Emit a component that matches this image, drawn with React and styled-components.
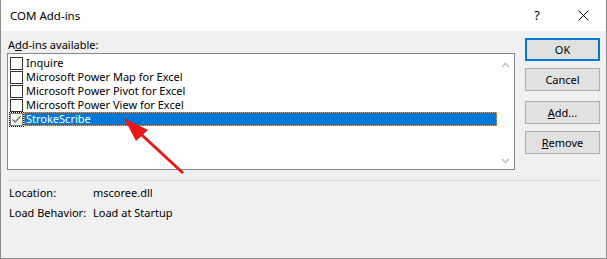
import React from "react";
import styled, { createGlobalStyle } from "styled-components";

const Global = createGlobalStyle`
  html, body { margin: 0; padding: 0; background: #f0f0f0; }
  body { font-family: "Segoe UI", "Noto Sans", sans-serif; font-size: 11px; line-height: 14px; color: #000; }
`;

const Window = styled.div`
  position: relative;
  width: 607px;
  height: 259px;
  box-sizing: border-box;
  border: 1px solid #8c8c8c;
  border-top: none;
  background: #f0f0f0;
  display: flex;
  flex-direction: column;
  overflow: hidden;
`;

const TitleBar = styled.div`
  height: 31px;
  background: #fff;
  display: flex;
  align-items: center;
  padding: 0 0 0 9px;
  flex-shrink: 0;
`;

const Title = styled.div`
  flex: 1;
  font-size: 11.5px;
  padding-top: 1px;
`;

const TitleBtn = styled.div`
  width: 46px;
  height: 31px;
  display: flex;
  align-items: center;
  justify-content: center;
  font-size: 12.5px;
`;

const Body = styled.div`
  flex: 1;
  padding: 6px 6px 0 6px;
  display: flex;
  flex-direction: column;
`;

const TopArea = styled.div`
  display: flex;
  gap: 10px;
`;

const LeftCol = styled.div`
  width: 509px;
  display: flex;
  flex-direction: column;
`;

const Label = styled.div`
  height: 16px;
  line-height: 16px;
  padding-left: 1px;
`;

const U = styled.span`
  text-decoration: underline;
`;

const ListBox = styled.div`
  height: 117px;
  box-sizing: border-box;
  border: 1px solid #828790;
  background: #fff;
  display: flex;
`;

const Rows = styled.div`
  flex: 1;
  padding-top: 2px;
`;

const Row = styled.div`
  height: 14px;
  line-height: 14px;
  display: flex;
  align-items: center;
`;

const Box = styled.div`
  width: 13px;
  height: 13px;
  box-sizing: border-box;
  margin-left: 2px;
  border: 1px solid ${p => (p.$checked ? "#7a7a7a" : "#333")};
  background: #fff;
  outline: ${p => (p.$focus ? "1px dotted #000" : "none")};
  outline-offset: 0px;
  display: flex;
  align-items: center;
  justify-content: center;
  flex-shrink: 0;
`;

const RowText = styled.div`
  margin-left: 1px;
  height: 14px;
  line-height: 14px;
  padding-left: 2px;
  box-sizing: border-box;
  flex: ${p => (p.$selected ? 1 : "none")};
  background: ${p => (p.$selected ? "#0078d7" : "transparent")};
  color: ${p => (p.$selected ? "#fff" : "#000")};
  outline: ${p => (p.$selected ? "1px dotted #ff9a3c" : "none")};
  outline-offset: -1px;
  white-space: nowrap;
`;

const ScrollBar = styled.div`
  width: 17px;
  display: flex;
  flex-direction: column;
  justify-content: space-between;
  align-items: center;
  padding: 8px 0 5px;
`;

const RightCol = styled.div`
  display: flex;
  flex-direction: column;
  padding-top: 1px;
`;

const Button = styled.div`
  width: 75px;
  height: 23px;
  box-sizing: border-box;
  margin-top: ${p => p.$mt || 0}px;
  background: #e1e1e1;
  border: ${p => (p.$default ? "2px solid #0078d7" : "1px solid #adadad")};
  display: flex;
  align-items: center;
  justify-content: center;
`;

const Separator = styled.div`
  height: 1px;
  background: #dadada;
  margin: 10px 0 0 1px;
  width: 593px;
`;

const Info = styled.div`
  display: grid;
  grid-template-columns: 84px auto;
  grid-auto-rows: 20px;
  padding: 2px 0 0 2px;
  align-items: center;
  white-space: nowrap;
`;

const Arrow = styled.svg`
  position: absolute;
  left: 0;
  top: 0;
  pointer-events: none;
`;

const Check = () => (
  <svg width="11" height="11" viewBox="0 0 11 11">
    <path d="M1.5 5.5 L4 8 L9.5 2.5" fill="none" stroke="#6d6d6d" strokeWidth="1.4" />
  </svg>
);

const Chevron = ({ up }) => (
  <svg width="9" height="6" viewBox="0 0 9 6">
    <path d={up ? "M1 5 L4.5 1.5 L8 5" : "M1 1 L4.5 4.5 L8 1"} fill="none" stroke="#c4c4c4" strokeWidth="1.6" />
  </svg>
);

const items = [
  { name: "Inquire" },
  { name: "Microsoft Power Map for Excel" },
  { name: "Microsoft Power Pivot for Excel" },
  { name: "Microsoft Power View for Excel" },
  { name: "StrokeScribe", checked: true, selected: true },
];

export default function App() {
  return (
    <>
      <Global />
      <Window>
        <TitleBar>
          <Title>COM Add-ins</Title>
          <TitleBtn>?</TitleBtn>
          <TitleBtn>
            <svg width="11" height="11" viewBox="0 0 11 11">
              <path d="M0.5 0.5 L10.5 10.5 M10.5 0.5 L0.5 10.5" stroke="#000" strokeWidth="1" />
            </svg>
          </TitleBtn>
        </TitleBar>
        <Body>
          <TopArea>
            <LeftCol>
              <Label>A<U>d</U>d-ins available:</Label>
              <ListBox>
                <Rows>
                  {items.map(it => (
                    <Row key={it.name}>
                      <Box $checked={it.checked} $focus={it.selected}>
                        {it.checked && <Check />}
                      </Box>
                      <RowText $selected={it.selected}>{it.name}</RowText>
                    </Row>
                  ))}
                </Rows>
                <ScrollBar>
                  <Chevron up />
                  <Chevron />
                </ScrollBar>
              </ListBox>
            </LeftCol>
            <RightCol>
              <Button $default>OK</Button>
              <Button $mt={7}>Cancel</Button>
              <Button $mt={10}><span><U>A</U>dd...</span></Button>
              <Button $mt={7}><span><U>R</U>emove</span></Button>
            </RightCol>
          </TopArea>
          <Separator />
          <Info>
            <div>Location:</div>
            <div>mscoree.dll</div>
            <div>Load Behavior:</div>
            <div>Load at Startup</div>
          </Info>
        </Body>
        <Arrow width="607" height="259">
          <line x1="182" y1="173" x2="130" y2="125" stroke="#e81818" strokeWidth="3" />
          <polygon points="123,118 147,130 135,141" fill="#e81818" />
        </Arrow>
      </Window>
    </>
  );
}
